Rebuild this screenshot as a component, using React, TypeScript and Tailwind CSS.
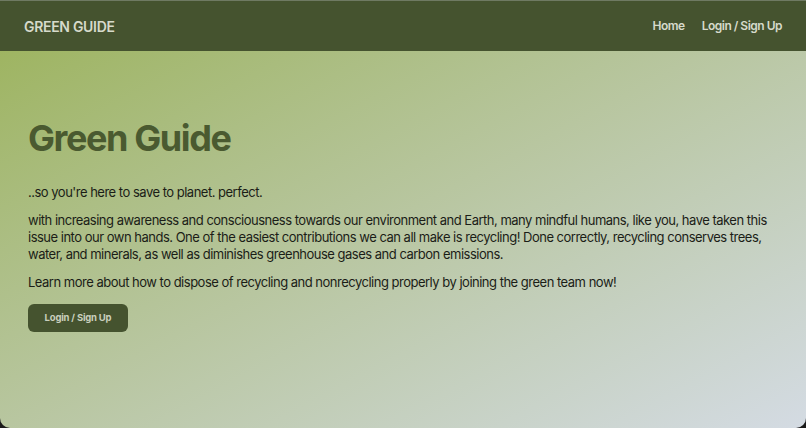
import React from 'react';

const NavBar: React.FC = () => (
  <nav className="flex h-[51px] items-center justify-between border-t border-[#6f7a63] bg-[#45532f] pl-6 pr-6">
    <span className="text-[14px] font-semibold tracking-[-0.3px] text-[#d6dacb]">GREEN GUIDE</span>
    <div className="flex items-center gap-[17px] text-[12px] font-semibold tracking-[-0.5px] text-[#d6dacb]">
      <a href="#">Home</a>
      <a href="#">Login / Sign Up</a>
    </div>
  </nav>
);

export default function App() {
  return (
    <div className="h-[428px] w-[806px] bg-[#1a1a1a]" style={{ fontFamily: 'Inter, "Noto Sans", sans-serif' }}>
      <div className="flex h-full flex-col overflow-hidden rounded-b-[10px] bg-gradient-to-br from-[#9bb258] via-[#b8c6a0] to-[#d4dbe3]">
        <NavBar />
        <main className="px-7 pt-[67px]">
          <h1 className="text-4xl font-bold tracking-[-1.4px] text-[#4a5a30]">Green Guide</h1>
          <div className="mt-[26px] space-y-[11px] text-[13px] leading-[17px] tracking-[-0.5px] text-[#1b1d17]">
            <p>..so you're here to save to planet. perfect.</p>
            <p>
              with increasing awareness and consciousness towards our environment and Earth, many mindful humans, like you, have taken this
              issue into our own hands. One of the easiest contributions we can all make is recycling! Done correctly, recycling conserves trees,
              water, and minerals, as well as diminishes greenhouse gases and carbon emissions.
            </p>
            <p>Learn more about how to dispose of recycling and nonrecycling properly by joining the green team now!</p>
          </div>
          <button className="mt-[13px] flex h-[28px] w-[100px] items-center justify-center rounded-md bg-[#45532f] text-[9.5px] font-bold tracking-[-0.2px] text-[#c9cfbd]">
            Login / Sign Up
          </button>
        </main>
      </div>
    </div>
  );
}
